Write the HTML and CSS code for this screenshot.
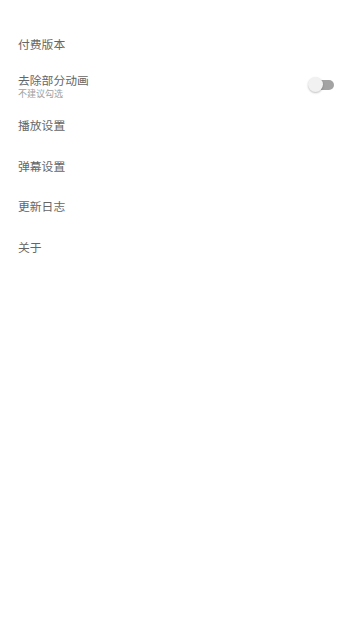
FILE: index.html
```html
<!DOCTYPE html>
<html lang="zh">
<head>
<meta charset="utf-8">
<meta name="viewport" content="width=360, initial-scale=1">
<link rel="stylesheet" href="styles.css">
</head>
<body>
<ul class="settings">
  <li class="row"><span class="title">付费版本</span></li>
  <li class="row row-two">
    <div class="text">
      <span class="title">去除部分动画</span>
      <span class="sub">不建议勾选</span>
    </div>
    <span class="switch"><span class="track"></span><span class="thumb"></span></span>
  </li>
  <li class="row"><span class="title">播放设置</span></li>
  <li class="row"><span class="title">弹幕设置</span></li>
  <li class="row"><span class="title">更新日志</span></li>
  <li class="row"><span class="title">关于</span></li>
</ul>
</body>
</html>
```
FILE: styles.css
```css
html, body {
  margin: 0;
  padding: 0;
  background: #ffffff;
  font-family: "Noto Sans CJK SC", "Noto Sans", sans-serif;
}
.settings {
  list-style: none;
  margin: 0;
  padding: 23.5px 0 0 0;
}
.row {
  height: 40.5px;
  display: flex;
  align-items: center;
  justify-content: space-between;
  padding: 0 26px 0 18px;
}
.row-two {
  height: 41px;
}
.text {
  display: flex;
  flex-direction: column;
  padding-top: 2px;
}
.title {
  font-size: 11.8px;
  line-height: 14px;
  color: #666666;
}
.row-two .title {
  margin-bottom: 1px;
}
.sub {
  font-size: 9px;
  line-height: 11px;
  color: #a0a0a0;
}
.switch {
  position: relative;
  width: 26px;
  height: 16px;
  display: block;
}
.track {
  position: absolute;
  left: 5px;
  top: 3px;
  width: 21px;
  height: 10px;
  border-radius: 5px;
  background: #a3a3a3;
}
.thumb {
  position: absolute;
  left: 0;
  top: 0;
  width: 15px;
  height: 15px;
  border-radius: 50%;
  background: #f1f1f1;
  box-shadow: 0 1px 2px rgba(0,0,0,0.25);
}
```
